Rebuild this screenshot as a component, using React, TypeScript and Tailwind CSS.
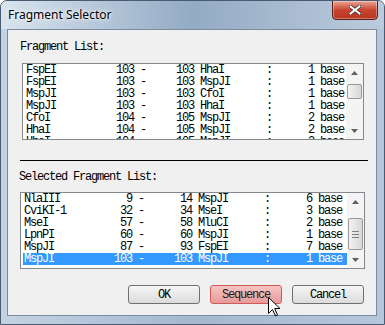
import React from "react";

type Frag = [string, string, string, string, string];

const FRAGMENTS: Frag[] = [
  ["FspEI", "103", "103", "HhaI", "1"],
  ["FspEI", "103", "103", "MspJI", "1"],
  ["MspJI", "103", "103", "CfoI", "1"],
  ["MspJI", "103", "103", "HhaI", "1"],
  ["CfoI", "104", "105", "MspJI", "2"],
  ["HhaI", "104", "105", "MspJI", "2"],
  ["HhaI", "104", "105", "MspJI", "2"],
];

const SELECTED: Frag[] = [
  ["NlaIII", "9", "14", "MspJI", "6"],
  ["CviKI-1", "32", "34", "MseI", "3"],
  ["MseI", "57", "58", "MluCI", "2"],
  ["LpnPI", "60", "60", "MspJI", "1"],
  ["MspJI", "87", "93", "FspEI", "7"],
  ["MspJI", "103", "103", "MspJI", "1"],
];

const mono = "font-['Liberation_Mono','DejaVu_Sans_Mono',monospace] text-[12px] tracking-[-1.2px]";

function line([a, s, e, b, n]: Frag) {
  return `${a.padEnd(15)}${s.padStart(3)} -${e.padStart(8)} ${b.padEnd(11)}:${n.padStart(7)} base`;
}

function Arrow({ up }: { up?: boolean }) {
  return (
    <div className="flex h-[17px] items-center justify-center">
      <svg width="7" height="4" viewBox="0 0 7 4">
        <path d={up ? "M0 4 L3.5 0 L7 4 Z" : "M0 0 L3.5 4 L7 0 Z"} fill="#606060" />
      </svg>
    </div>
  );
}

function ListBox({
  rows,
  selected,
  thumbTop,
  thumbH,
  grip,
  className,
}: {
  rows: Frag[];
  selected?: number;
  thumbTop: number;
  thumbH: number;
  grip?: boolean;
  className: string;
}) {
  return (
    <div className={`flex h-[77px] overflow-hidden border border-[#828790] bg-white ${className}`}>
      <div className={`flex-1 overflow-hidden pl-[3px] pt-[0px] ${mono}`}>
        {rows.map((r, i) => (
          <div
            key={i}
            className={`h-[12px] whitespace-pre leading-[12px] ${
              i === selected ? "-ml-[1px] pl-[1px] bg-[#3399ff] text-white" : "text-black"
            }`}
          >
            {line(r)}
          </div>
        ))}
      </div>
      <div className="relative w-[17px] shrink-0 bg-[#f4f4f4]">
        <Arrow up />
        <div
          className="absolute left-[1px] right-[1px] flex flex-col items-center justify-center gap-[2px] rounded-[2px] border border-[#9a9a9a] bg-gradient-to-r from-[#f2f2f2] to-[#d8d8d8]"
          style={{ top: thumbTop, height: thumbH }}
        >
          {grip &&
            [0, 1, 2].map((k) => <div key={k} className="h-[1px] w-[7px] bg-[#808080]" />)}
        </div>
        <div className="absolute bottom-0 left-0 right-0">
          <Arrow />
        </div>
      </div>
    </div>
  );
}

function Button({ label, hot }: { label: string; hot?: boolean }) {
  return (
    <div
      className={`flex h-[19px] w-[72px] items-center justify-center rounded-[3px] border ${mono} ${
        hot
          ? "border-[#d05a5a] bg-gradient-to-b from-[#f6c4c4] to-[#e89a9a] text-[#202020]"
          : "border-[#707070] bg-gradient-to-b from-[#f6f6f6] to-[#dcdcdc] text-black"
      }`}
    >
      {label}
    </div>
  );
}

export default function App() {
  return (
    <div className="relative h-[325px] w-[385px] overflow-hidden rounded-t-[7px] border border-[#4a5a70] bg-gradient-to-r from-[#c4d3e3] via-[#a3b8cf] to-[#b6c7da]">
      <div className="flex h-[28px] items-center bg-gradient-to-r from-[#d9e4ef] via-[#93abc4] to-[#bccbdc] pl-[7px]">
        <span className="font-['Noto_Sans',sans-serif] text-[12px] text-black [text-shadow:0_0_6px_#ffffff,0_0_3px_#ffffff]">
          Fragment Selector
        </span>
      </div>

      <div className="absolute right-[6px] top-[-1px] flex h-[20px] w-[46px] items-center justify-center rounded-b-[4px] border border-[#5a1e18] bg-gradient-to-b from-[#e8a696] via-[#c8432e] to-[#b83520] shadow-[inset_0_0_0_1px_rgba(255,255,255,0.35)]">
        <svg width="12" height="10" viewBox="0 0 12 10">
          <path d="M1 1 L11 9 M11 1 L1 9" stroke="#3a2a2a" strokeWidth="3.4" strokeLinecap="square" />
          <path d="M1.5 1.5 L10.5 8.5 M10.5 1.5 L1.5 8.5" stroke="#ffffff" strokeWidth="2" strokeLinecap="square" />
        </svg>
      </div>

      <div className="ml-[6px] mr-[7px] flex h-[287px] flex-col border border-[#7a8aa0] bg-[#f0f0f0]">
        <div className={`ml-[12px] mt-[11px] h-[12px] leading-[12px] text-black ${mono}`}>Fragment List:</div>
        <ListBox
          rows={FRAGMENTS}
          thumbTop={20}
          thumbH={15}
          className="ml-[14px] mr-[12px] mt-[10px]"
        />
        <div className="ml-[12px] mr-[8px] mt-[20px] h-[1px] bg-black" />
        <div className={`ml-[11px] mt-[10px] h-[12px] leading-[12px] text-black ${mono}`}>
          Selected Fragment List:
        </div>
        <ListBox
          rows={SELECTED}
          selected={5}
          thumbTop={25}
          thumbH={32}
          grip
          className="ml-[12px] mr-[11px] mt-[9px]"
        />
        <div className="mr-[12px] mt-[16px] flex justify-end gap-[10px]">
          <Button label="OK" />
          <Button label="Sequence" hot />
          <Button label="Cancel" />
        </div>
      </div>

      <svg
        className="absolute left-[267px] top-[296px]"
        width="13"
        height="20"
        viewBox="0 0 13 20"
      >
        <path
          d="M0.5 0.5 L0.5 16.5 L4.5 12.5 L7.5 19 L9.5 18 L6.7 11.5 L12 11.5 Z"
          fill="#ffffff"
          stroke="#000000"
          strokeWidth="1"
          strokeLinejoin="miter"
        />
      </svg>
    </div>
  );
}
